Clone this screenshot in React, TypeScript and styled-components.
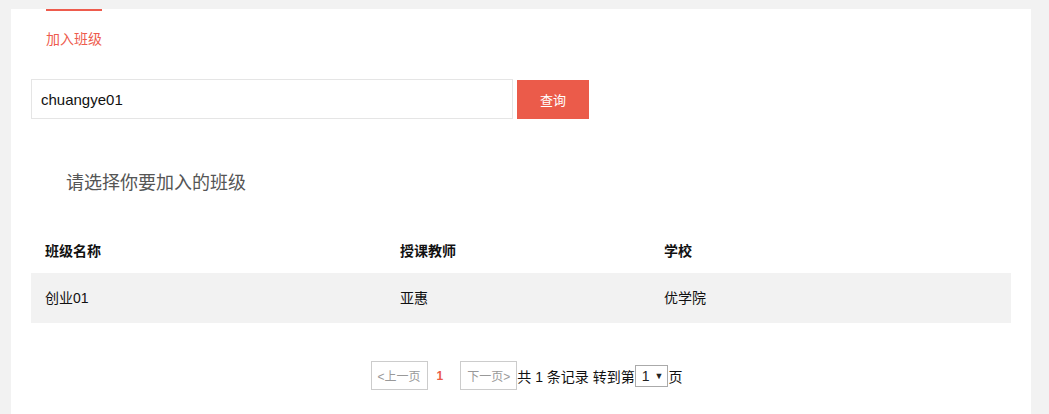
import React, { useState } from 'react';
import styled, { createGlobalStyle } from 'styled-components';

const colors = {
  red: '#eb5b4a',
  bg: '#f2f2f2',
  border: '#e5e5e5',
  text: '#222',
};

const GlobalStyle = createGlobalStyle`
  html, body {
    margin: 0;
    padding: 0;
    background: ${colors.bg};
    font-family: "Liberation Sans", "Noto Sans CJK SC", sans-serif;
    font-size: 14px;
    color: ${colors.text};
  }
  * { box-sizing: border-box; }
`;

const classes = [{ name: '创业01', teacher: '亚惠', school: '优学院' }];

const App = () => {
  const [keyword, setKeyword] = useState('chuangye01');
  return (
    <>
      <GlobalStyle />
      <Panel>
        <TabBar>
          <Tab active>加入班级</Tab>
        </TabBar>
        <SearchRow>
          <SearchInput value={keyword} onChange={(e) => setKeyword(e.target.value)} />
          <SearchButton>查询</SearchButton>
        </SearchRow>
        <Heading>请选择你要加入的班级</Heading>
        <Table>
          <HeadRow>
            <Cell>班级名称</Cell>
            <Cell>授课教师</Cell>
            <Cell>学校</Cell>
          </HeadRow>
          {classes.map((c) => (
            <BodyRow key={c.name}>
              <Cell>{c.name}</Cell>
              <Cell>{c.teacher}</Cell>
              <Cell>{c.school}</Cell>
            </BodyRow>
          ))}
        </Table>
        <Pager>
          <PageBtn>&lt;上一页</PageBtn>
          <Current>1</Current>
          <PageBtn>下一页&gt;</PageBtn>
          <PagerText>共 1 条记录 转到第</PagerText>
          <JumpBox>
            1<span className="arrow">▼</span>
          </JumpBox>
          <PagerText>页</PagerText>
        </Pager>
      </Panel>
    </>
  );
};

const Panel = styled.div`
  margin: 9px 0 0 11px;
  width: 1020px;
  min-height: 405px;
  background: #fff;
  padding: 0 20px;
`;

const TabBar = styled.div`
  display: flex;
  padding-left: 15px;
`;

const Tab = styled.div<{ active?: boolean }>`
  border-top: 2px solid ${(p) => (p.active ? '#ee5b4d' : 'transparent')};
  padding-top: 18px;
  font-size: 14px;
  line-height: 20px;
  color: ${(p) => (p.active ? '#ee5b4d' : '#666')};
`;

const SearchRow = styled.div`
  display: flex;
  align-items: flex-start;
  gap: 4px;
  margin-top: 30px;
`;

const SearchInput = styled.input`
  width: 482px;
  height: 40px;
  border: 1px solid ${colors.border};
  padding: 0 9px;
  font-family: inherit;
  font-size: 15px;
  color: #111;
  outline: none;
`;

const SearchButton = styled.button`
  margin-top: 1px;
  width: 72px;
  height: 39px;
  border: none;
  background: ${colors.red};
  color: #fff;
  font-family: inherit;
  font-size: 13px;
  cursor: pointer;
`;

const Heading = styled.div`
  margin-top: 52px;
  padding-left: 35px;
  font-size: 18px;
  line-height: 24px;
  color: #555;
`;

const Table = styled.div`
  margin-top: 34px;
  width: 980px;
`;

const HeadRow = styled.div`
  display: grid;
  grid-template-columns: 355px 264px 1fr;
  height: 44px;
  align-items: center;
  font-weight: bold;
  font-size: 14px;
  color: #111;
`;

const BodyRow = styled(HeadRow)`
  height: 50px;
  font-weight: normal;
  background: ${colors.bg};
`;

const Cell = styled.div`
  padding-left: 14px;
  line-height: 20px;
`;

const Pager = styled.div`
  display: flex;
  justify-content: center;
  align-items: center;
  margin-top: 38px;
  padding-left: 11px;
`;

const PageBtn = styled.span`
  display: inline-flex;
  align-items: center;
  height: 29px;
  padding: 0 6px;
  border: 1px solid #ccc;
  font-size: 12px;
  color: #999;
  cursor: pointer;
`;

const Current = styled.span`
  margin: 0 17px 0 9px;
  font-size: 12px;
  font-weight: bold;
  color: ${colors.red};
`;

const PagerText = styled.span`
  font-size: 14px;
  color: #111;
`;

const JumpBox = styled.span`
  display: inline-flex;
  align-items: center;
  gap: 5px;
  height: 22px;
  padding: 0 4px 0 6px;
  border: 1px solid #aaa;
  font-size: 14px;
  .arrow {
    font-size: 9px;
  }
`;

export default App;
